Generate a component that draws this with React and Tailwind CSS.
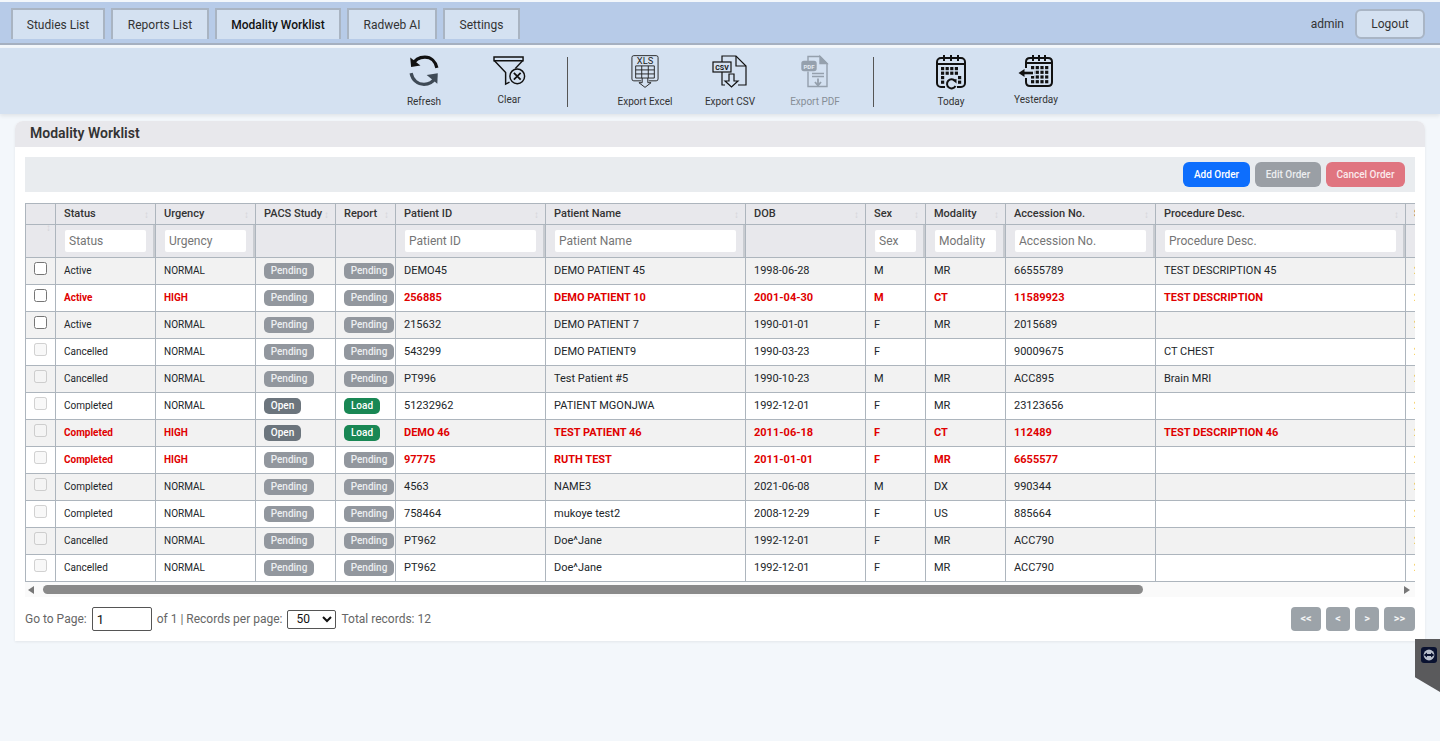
import React from 'react';

const tabs = [
    { label: 'Studies List', w: 'w-[94px]' },
    { label: 'Reports List', w: 'w-[98px]' },
    { label: 'Modality Worklist', w: 'w-[126px]', active: true },
    { label: 'Radweb AI', w: 'w-[90px]' },
    { label: 'Settings', w: 'w-[77px]' },
];

const IconRefresh = () => (
    <svg width="32" height="33" viewBox="0 0 36 36" fill="none">
        <path d="M5 12 C8 5 14 3 19 3 C26 3 31 8 32.5 15" stroke="#111" strokeWidth="3.6" />
        <path d="M2.5 3.5 L3.5 14 L14 12.5 Z" fill="#111" />
        <path d="M3.5 21 C5 29 11 33.5 18 33.5 C24 33.5 28 31 31 26" stroke="#3f4a56" strokeWidth="3.6" />
        <path d="M21 23 L33.5 21 L33 33 Z" fill="#3f4a56" />
    </svg>
);

const IconClear = () => (
    <svg className="mt-[2px]" width="33" height="31" viewBox="0 0 34 32" fill="none" stroke="#111" strokeWidth="1.5">
        <path d="M1 1 H31 V5 H1 Z" />
        <path d="M1.5 5 L13 17 V29 L17 27" />
        <path d="M30.5 5 L23 13" />
        <circle cx="25" cy="21" r="7.6" />
        <path d="M21.5 17.5 L28.5 24.5 M28.5 17.5 L21.5 24.5" strokeWidth="1.8" />
    </svg>
);

const IconXls = () => (
    <svg width="28" height="35" viewBox="0 0 30 36" fill="none" stroke="#222" strokeWidth="1">
        <path d="M11 28 H3 Q1 28 1 26 V3 Q1 1 3 1 H27 Q29 1 29 3 V26 Q29 28 27 28 H19" />
        <path d="M12 25 V30 H8.5 L15 35 L21.5 30 H18 V25" />
        <text x="15" y="10" textAnchor="middle" fontSize="10" fill="#222" stroke="none" fontFamily="Roboto, sans-serif">XLS</text>
        <path d="M5 12 H25 V25 H5 Z M5 16.3 H25 M5 20.6 H25 M11.5 12 V25 M18.5 12 V25" />
    </svg>
);

const IconCsv = () => (
    <svg width="36" height="34" viewBox="0 0 36 34" fill="none" stroke="#111" strokeWidth="1.2">
        <path d="M10 8 V2 H24 L34 12 V31 H26 M10 18 V31 H13" />
        <path d="M24 2 V12 H34" />
        <rect x="1" y="8" width="18" height="10" fill="#d4e1f1" />
        <text x="10" y="15.6" textAnchor="middle" fontSize="7" fontWeight="700" fill="#111" stroke="none" fontFamily="Roboto, sans-serif">CSV</text>
        <path d="M17 20 H22 V27 H26 L19.5 33 L13 27 H17 Z" />
    </svg>
);

const IconPdf = () => (
    <svg width="30" height="35" viewBox="0 0 30 34" fill="none" stroke="#8f9aa6" strokeWidth="1.4" opacity="0.9">
        <path d="M8 8 V2 H20 L27 9 V32 H8 V17" />
        <path d="M20 2 L27 9 H20 Z" fill="#8f9aa6" />
        <rect x="2" y="7" width="14" height="9" rx="2" fill="#8f9aa6" />
        <text x="9" y="14" textAnchor="middle" fontSize="6" fontWeight="700" fill="#e5ebf2" stroke="none" fontFamily="Roboto, sans-serif">PDF</text>
        <path d="M12 19 H24 M12 22 H24" />
        <path d="M18 24 V30 M15 27.5 L18 31 L21 27.5" strokeWidth="1.8" />
    </svg>
);

const CalendarGrid = ({ x, y, cols, rows, gap = 4.6 }) => {
    const cells = [];
    for (let r = 0; r < rows; r++) {
        for (let c = 0; c < cols; c++) {
            cells.push(<rect key={`${r}-${c}`} x={x + c * gap} y={y + r * gap} width="3.2" height="3.2" fill="#111" stroke="none" />);
        }
    }
    return <>{cells}</>;
};

const IconToday = () => (
    <svg width="30" height="36" viewBox="0 0 30 36" fill="none" stroke="#111" strokeWidth="2">
        <rect x="1" y="4" width="28" height="29" rx="4" />
        <path d="M1 10 H29" />
        <path d="M8 1 V7 M15 1 V7 M22 1 V7" />
        <CalendarGrid x={5} y={13} cols={4} rows={2} />
        <CalendarGrid x={5} y={22} cols={1} rows={2} />
        <CalendarGrid x={22} y={22} cols={1} rows={2} />
        <rect x="9" y="24" width="12" height="12" fill="#d4e1f1" stroke="none" />
        <path d="M19 27 A4.5 4.5 0 1 0 19.5 32" />
        <path d="M16.5 26 L20.5 25 L20.5 29.5 Z" fill="#111" stroke="none" />
    </svg>
);

const IconYesterday = () => (
    <svg width="36" height="34" viewBox="0 0 36 34" fill="none" stroke="#111" strokeWidth="2">
        <path d="M8 14 V8 Q8 4 12 4 H30 Q34 4 34 8 V28 Q34 32 30 32 H12 Q8 32 8 28 V24" />
        <path d="M8 9 H34" />
        <path d="M15 1 V7 M21 1 V7 M27 1 V7" />
        <CalendarGrid x={13} y={12} cols={4} rows={4} gap={4.7} />
        <rect x="0" y="16" width="16" height="6" fill="#d4e1f1" stroke="none" />
        <path d="M4 19 H15" strokeWidth="2.6" />
        <path d="M0.5 19 L6.5 15 V23 Z" fill="#111" stroke="none" />
    </svg>
);

const tools = [
    { label: 'Refresh', Icon: IconRefresh, box: 'h-[42px]' },
    { label: 'Clear', Icon: IconClear, box: 'h-[40px]' },
    { divider: true },
    { label: 'Export Excel', Icon: IconXls, box: 'h-[42px]' },
    { label: 'Export CSV', Icon: IconCsv, box: 'h-[42px]' },
    { label: 'Export PDF', Icon: IconPdf, box: 'h-[42px]', disabled: true },
    { divider: true },
    { label: 'Today', Icon: IconToday, box: 'h-[42px]' },
    { label: 'Yesterday', Icon: IconYesterday, box: 'h-[40px]' },
];

const columns = [
    { key: 'check', w: 'w-[30px]' },
    { key: 'status', label: 'Status', w: 'w-[100px]', filter: true },
    { key: 'urgency', label: 'Urgency', w: 'w-[100px]', filter: true },
    { key: 'pacs', label: 'PACS Study', w: 'w-[80px]' },
    { key: 'report', label: 'Report', w: 'w-[60px]' },
    { key: 'pid', label: 'Patient ID', w: 'w-[150px]', filter: true },
    { key: 'name', label: 'Patient Name', w: 'w-[200px]', filter: true },
    { key: 'dob', label: 'DOB', w: 'w-[120px]' },
    { key: 'sex', label: 'Sex', w: 'w-[60px]', filter: true },
    { key: 'mod', label: 'Modality', w: 'w-[80px]', filter: true },
    { key: 'acc', label: 'Accession No.', w: 'w-[150px]', filter: true },
    { key: 'proc', label: 'Procedure Desc.', w: 'w-[250px]', filter: true },
    { key: 'sched', label: 'Scheduled', w: 'w-[150px]' },
];

const rows = [
    ['Active', 'NORMAL', 'Pending', 'Pending', 'DEMO45', 'DEMO PATIENT 45', '1998-06-28', 'M', 'MR', '66555789', 'TEST DESCRIPTION 45', false, true],
    ['Active', 'HIGH', 'Pending', 'Pending', '256885', 'DEMO PATIENT 10', '2001-04-30', 'M', 'CT', '11589923', 'TEST DESCRIPTION', true, true],
    ['Active', 'NORMAL', 'Pending', 'Pending', '215632', 'DEMO PATIENT 7', '1990-01-01', 'F', 'MR', '2015689', '', false, true],
    ['Cancelled', 'NORMAL', 'Pending', 'Pending', '543299', 'DEMO PATIENT9', '1990-03-23', 'F', '', '90009675', 'CT CHEST', false],
    ['Cancelled', 'NORMAL', 'Pending', 'Pending', 'PT996', 'Test Patient #5', '1990-10-23', 'M', 'MR', 'ACC895', 'Brain MRI', false],
    ['Completed', 'NORMAL', 'Open', 'Load', '51232962', 'PATIENT MGONJWA', '1992-12-01', 'F', 'MR', '23123656', '', false],
    ['Completed', 'HIGH', 'Open', 'Load', 'DEMO 46', 'TEST PATIENT 46', '2011-06-18', 'F', 'CT', '112489', 'TEST DESCRIPTION 46', true],
    ['Completed', 'HIGH', 'Pending', 'Pending', '97775', 'RUTH TEST', '2011-01-01', 'F', 'MR', '6655577', '', true],
    ['Completed', 'NORMAL', 'Pending', 'Pending', '4563', 'NAME3', '2021-06-08', 'M', 'DX', '990344', '', false],
    ['Completed', 'NORMAL', 'Pending', 'Pending', '758464', 'mukoye test2', '2008-12-29', 'F', 'US', '885664', '', false],
    ['Cancelled', 'NORMAL', 'Pending', 'Pending', 'PT962', 'Doe^Jane', '1992-12-01', 'F', 'MR', 'ACC790', '', false],
    ['Cancelled', 'NORMAL', 'Pending', 'Pending', 'PT962', 'Doe^Jane', '1992-12-01', 'F', 'MR', 'ACC790', '', false],
];

const Badge = ({ text }) => {
    const colour = text === 'Load' ? 'bg-[#198754] text-white' : text === 'Open' ? 'bg-[#6c757d] text-white' : 'bg-[#92979e] text-[#eceef0]';
    const width = text === 'Pending' ? 'w-[50px]' : text === 'Open' ? 'w-[37px]' : 'w-[36px]';
    return (
        <span className={`inline-flex h-4 items-center justify-center rounded-[5px] font-medium text-[10px] align-middle ${colour} ${width}`}>
            {text}
        </span>
    );
};

const SortMark = () => (
    <span className="absolute right-[6px] top-[5px] text-[10px] leading-3 text-[#d4d4d8]">↕</span>
);

const pageBtn = 'flex h-6 items-center justify-center rounded bg-[#9ca3a9] text-[11px] font-bold text-[#f2f3f4]';

const App = () => {
    return (
        <div className="h-screen overflow-hidden bg-[#f3f7fb] font-['Roboto',sans-serif] text-[#212529]">
            {/* top nav */}
            <div className="mt-[2px] flex h-[43px] items-start justify-between border-b-2 border-[#a5b0c0] bg-[#b7cbe8] pl-[11px] pr-[15px] pt-[6px]">
                <div className="flex gap-[6px]">
                    {tabs.map((t) => (
                        <div
                            key={t.label}
                            className={`flex h-[31px] items-center justify-center border-2 border-b-0 border-[#a9b4c2] bg-[#d4e1f1] text-[12px] ${t.w} ${t.active ? 'font-medium text-[#111]' : 'text-[#333]'}`}
                        >
                            {t.label}
                        </div>
                    ))}
                </div>
                <div className="mt-px flex items-center gap-[11px]">
                    <span className="text-[12px] text-[#333]">admin</span>
                    <button className="flex h-[30px] w-[70px] items-center justify-center rounded-md border-2 border-[#a9b5c5] bg-[#d4e1f1] text-[12px] text-[#333]">
                        Logout
                    </button>
                </div>
            </div>

            {/* tool bar */}
            <div className="mt-[3px] flex h-[66px] justify-center bg-[#d4e1f1] pl-5 shadow-[0_2px_4px_rgba(0,0,0,0.08)]">
                {tools.map((t, i) =>
                    t.divider ? (
                        <div key={i} className="ml-[15px] mr-[35px] mt-[9px] h-[50px] w-px bg-[#555]" />
                    ) : (
                        <div key={t.label} className="flex w-[85px] flex-col items-center pt-[6px]">
                            <div className={`flex w-full items-start justify-center ${t.box}`}>
                                <t.Icon />
                            </div>
                            <span className={`text-[10px] leading-3 ${t.disabled ? 'text-[#868e96]' : 'text-[#333]'}`}>{t.label}</span>
                        </div>
                    )
                )}
            </div>

            {/* card */}
            <div className="mx-[15px] mt-[7px] h-[520px] rounded-t-lg bg-white shadow-[0_1px_3px_rgba(0,0,0,0.07)]">
                <div className="flex h-[26px] items-center rounded-t-lg bg-[#e8e8ec] pb-[2px] pl-[15px] text-[14px] font-semibold text-[#333]">
                    Modality Worklist
                </div>
                <div className="px-[10px] pt-[10px]">
                    <div className="flex h-[35px] items-center justify-end gap-[5px] bg-[#e9ecef] pr-[10px]">
                        <button className="h-[25px] w-[67px] rounded-md bg-[#0d6efd] text-[10px] font-medium text-white">Add Order</button>
                        <button className="h-[25px] w-[66px] rounded-md bg-[#9a9fa5] text-[10px] font-medium text-[#eceef0]">Edit Order</button>
                        <button className="h-[25px] w-[79px] rounded-md bg-[#e07580] text-[10px] font-medium text-[#fbeaec]">Cancel Order</button>
                    </div>

                    <div className="mt-[11px] overflow-hidden">
                        <table className="w-[1530px] table-fixed border-collapse text-[11px]">
                            <thead>
                                <tr className="h-[21px] bg-[#e8e8ec]">
                                    {columns.map((c) => (
                                        <th key={c.key} className={`relative border border-[#adb5bd] pl-2 text-left font-medium text-[#333] ${c.w}`}>
                                            {c.label}
                                            {c.label && <SortMark />}
                                        </th>
                                    ))}
                                </tr>
                                <tr className="h-[33px] bg-[#e8e8ec]">
                                    {columns.map((c) => (
                                        <th key={c.key} className="relative border border-[#adb5bd] pl-[9px] pr-[9px] font-normal">
                                            {c.key === 'check' && <span className="absolute left-[20px] top-[-3px] text-[10px] leading-3 text-[#d4d4d8]">↕</span>}
                                            {c.filter && (
                                                <>
                                                    <input
                                                        placeholder={c.label}
                                                        className="block h-[22px] w-full rounded-[2px] bg-white px-1 text-[12px] font-normal placeholder:text-[#757575]"
                                                    />
                                                    <span className="absolute bottom-0 right-0 top-0 w-[2px] bg-[#c9ccd1]" />
                                                </>
                                            )}
                                        </th>
                                    ))}
                                </tr>
                            </thead>
                            <tbody>
                                {rows.map((r, i) => {
                                    const [status, urgency, pacs, report, pid, name, dob, sex, mod, acc, proc, high, enabled] = r;
                                    const rowText = high ? 'font-bold text-[#e00000]' : 'text-[#212529]';
                                    const td = 'border border-[#adb5bd] pl-2 align-middle whitespace-nowrap overflow-hidden';
                                    return (
                                        <tr key={i} className={`h-[27px] ${i % 2 === 0 ? 'bg-[#f2f2f2]' : 'bg-white'} ${rowText}`}>
                                            <td className={`${td} pb-[5px] leading-none`}>
                                                <input type="checkbox" disabled={!enabled} className="align-middle" />
                                            </td>
                                            <td className={`${td} pb-[2px] text-[10px]`}>{status}</td>
                                            <td className={`${td} pb-[2px] text-[10px]`}>{urgency}</td>
                                            <td className={td}><Badge text={pacs} /></td>
                                            <td className={td}><Badge text={report} /></td>
                                            <td className={td}>{pid}</td>
                                            <td className={td}>{name}</td>
                                            <td className={td}>{dob}</td>
                                            <td className={td}>{sex}</td>
                                            <td className={td}>{mod}</td>
                                            <td className={td}>{acc}</td>
                                            <td className={td}>{proc}</td>
                                            <td className={`${td} font-normal text-[#c98a2b]`}>2025-01-01</td>
                                        </tr>
                                    );
                                })}
                            </tbody>
                        </table>
                    </div>

                    {/* scroll bar */}
                    <div className="flex h-[15px] items-center bg-[#fafafa] pl-[3px] pr-[5px]">
                        <LeftArrow />
                        <div className="ml-[9px] h-[9px] w-[1100px] rounded-full bg-[#8a8a8a]" />
                        <div className="flex-1" />
                        <RightArrow />
                    </div>

                    {/* pagination */}
                    <div className="mt-[10px] flex items-center justify-between text-[12px] text-[#666]">
                        <div className="flex items-center">
                            <span>Go to Page:</span>
                            <input readOnly value="1" className="ml-[5px] h-6 w-[60px] rounded-[2px] border border-[#555] px-1 text-[13px] text-[#111]" />
                            <span className="ml-[5px]">of 1 | Records per page:</span>
                            <select defaultValue="50" className="ml-[5px] h-[19px] w-[49px] rounded-[2px] border border-[#555] bg-white pl-1 text-[12px] text-[#111]">
                                <option>50</option>
                            </select>
                            <span className="ml-[5px]">Total records: 12</span>
                        </div>
                        <div className="flex gap-[5px]">
                            <div className={`${pageBtn} w-[30px]`}>&lt;&lt;</div>
                            <div className={`${pageBtn} w-[24px]`}>&lt;</div>
                            <div className={`${pageBtn} w-[24px]`}>&gt;</div>
                            <div className={`${pageBtn} w-[31px]`}>&gt;&gt;</div>
                        </div>
                    </div>
                </div>
            </div>

            {/* remote support widget */}
            <div className="absolute right-0 top-[639px] h-[53px] w-[25px] bg-[#5a5a5c] [clip-path:polygon(0_0,100%_0,100%_100%,0_72%)]">
                <svg className="ml-[6px] mt-[8px]" width="16" height="16" viewBox="0 0 16 16">
                    <rect width="16" height="16" rx="3" fill="#0a1230" />
                    <circle cx="8" cy="8" r="5.4" fill="#b9bfcc" />
                    <path d="M2.8 8 L6 5.4 V7 H10 V5.4 L13.2 8 L10 10.6 V9 H6 V10.6 Z" fill="#0a1230" />
                </svg>
            </div>
        </div>
    );
};

const LeftArrow = () => (
    <svg width="6" height="8" viewBox="0 0 6 8"><path d="M6 0 V8 L0 4 Z" fill="#777" /></svg>
);

const RightArrow = () => (
    <svg width="6" height="8" viewBox="0 0 6 8"><path d="M0 0 V8 L6 4 Z" fill="#777" /></svg>
);

export default App;
